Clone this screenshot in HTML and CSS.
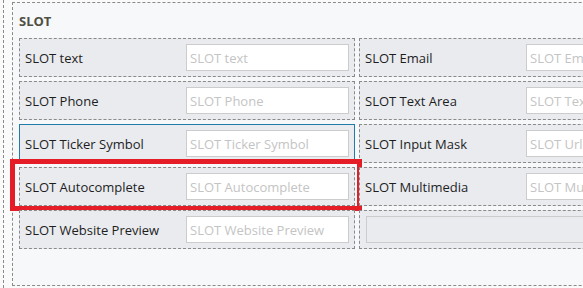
FILE: index.html
```html
<!DOCTYPE html>
<html lang="en">
<head>
  <meta charset="UTF-8">
  <title>SLOT fields</title>
  <link rel="stylesheet" href="styles.css">
</head>
<body>
  <div class="page">
    <div class="section">
      <h3 class="section-title">SLOT</h3>

      <div class="fields">
        <div class="field">
          <label>SLOT text</label>
          <input type="text" placeholder="SLOT text" />
        </div>
        <div class="field">
          <label>SLOT Email</label>
          <input type="text" placeholder="SLOT Email" />
        </div>

        <div class="field">
          <label>SLOT Phone</label>
          <input type="text" placeholder="SLOT Phone" />
        </div>
        <div class="field">
          <label>SLOT Text Area</label>
          <input type="text" placeholder="SLOT Text Area" />
        </div>

        <div class="field active">
          <label>SLOT Ticker Symbol</label>
          <input type="text" placeholder="SLOT Ticker Symbol" />
        </div>
        <div class="field">
          <label>SLOT Input Mask</label>
          <input type="text" placeholder="SLOT Url" />
        </div>

        <div class="field marked">
          <label>SLOT Autocomplete</label>
          <input type="text" placeholder="SLOT Autocomplete" />
          <div class="highlight"></div>
        </div>
        <div class="field">
          <label>SLOT Multimedia</label>
          <input type="text" placeholder="SLOT Multimedia" />
        </div>

        <div class="field">
          <label>SLOT Website Preview</label>
          <input type="text" placeholder="SLOT Website Preview" />
        </div>
        <div class="field">
          <div class="empty-box"></div>
        </div>
      </div>
    </div>
  </div>
</body>
</html>
```

FILE: styles.css
```css
body {
  margin: 0;
  background: #fafafa;
  overflow: hidden;
  font-family: "Open Sans", "Noto Sans", sans-serif;
  font-size: 13px;
  color: #1e1e1e;
}
.page {
  margin-left: 3px;
  padding: 2px 0 0 8px;
  height: 288px;
  border-left: 1px dashed #8a8a8a;
  box-sizing: border-box;
}
.section {
  display: inline-block;
  padding: 9px 6px 36px 6px;
  background: #f7f8fa;
  border: 1px dashed #8a8a8a;
  white-space: nowrap;
}
.section-title {
  margin: 0 0 8px 0;
  font-size: 13px;
  line-height: 18px;
  font-weight: 700;
  color: #4f4f42;
}
.fields {
  display: grid;
  grid-template-columns: 336px 336px;
  gap: 4px;
}
.field {
  position: relative;
  display: flex;
  align-items: center;
  height: 39px;
  box-sizing: border-box;
  padding: 0 5px;
  background: #e9ebef;
  border: 1px dashed #8a8a8a;
}
.field.active {
  border: 1px solid #1f7ca8;
}
.field label {
  flex: 1;
  line-height: 18px;
}
.field input {
  width: 163px;
  height: 27px;
  box-sizing: border-box;
  margin: 0;
  padding: 0 3px;
  border: 1px solid #cccccc;
  background: #ffffff;
  font-family: inherit;
  font-size: 13px;
  outline: none;
}
.field input::placeholder {
  color: #c4c4c4;
}
.empty-box {
  flex: 1;
  height: 25px;
  margin-left: 1px;
  border: 1px solid #cccccc;
  background: #e9ebef;
}
.highlight {
  position: absolute;
  left: -10px;
  top: -9px;
  width: 352px;
  height: 52px;
  box-sizing: border-box;
  border: 5px solid #e51d26;
  pointer-events: none;
}
```
